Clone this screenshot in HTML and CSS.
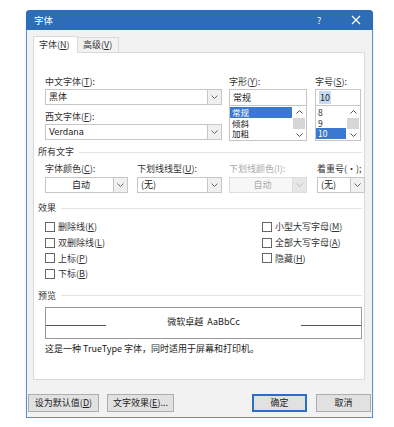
FILE: index.html
```html
<!DOCTYPE html>
<html>
  <head>
    <title>字体</title>
    <link rel="stylesheet" href="styles.css">
  </head>
  <body>
    <div class="dialog">
      <div class="titlebar">
        <span class="title">字体</span>
        <span class="help">?</span>
        <span class="close">
          <svg width="10" height="10" viewBox="0 0 10 10"><path d="M1 1L9 9M9 1L1 9" stroke="#fff" stroke-width="1.2"/></svg>
        </span>
      </div>

      <div class="body">
        <div class="tabs">
          <div class="tab active">字体(<u>N</u>)</div>
          <div class="tab">高级(<u>V</u>)</div>
        </div>

        <div class="panel">
          <div class="fonts">
            <div class="col">
              <div class="label">中文字体(<u>T</u>):</div>
              <div class="select">
                <span class="val">黑体</span>
                <span class="arrow"><svg width="7" height="4" viewBox="0 0 7 4"><path d="M0.5 0.5L3.5 3.5L6.5 0.5" fill="none" stroke="#666"/></svg></span>
              </div>
              <div class="label second">西文字体(<u>F</u>):</div>
              <div class="select">
                <span class="val latin">Verdana</span>
                <span class="arrow"><svg width="7" height="4" viewBox="0 0 7 4"><path d="M0.5 0.5L3.5 3.5L6.5 0.5" fill="none" stroke="#666"/></svg></span>
              </div>
            </div>
            <div class="col">
              <div class="label">字形(<u>Y</u>):</div>
              <div class="input">常规</div>
              <div class="list">
                <div class="items">
                  <div class="item selected">常规</div>
                  <div class="item">倾斜</div>
                  <div class="item">加粗</div>
                </div>
                <div class="scroll">
                  <svg width="7" height="4" viewBox="0 0 7 4"><path d="M0.5 3.5L3.5 0.5L6.5 3.5" fill="none" stroke="#555"/></svg>
                  <div class="thumb"></div>
                  <svg width="7" height="4" viewBox="0 0 7 4"><path d="M0.5 0.5L3.5 3.5L6.5 0.5" fill="none" stroke="#555"/></svg>
                </div>
              </div>
            </div>
            <div class="col">
              <div class="label">字号(<u>S</u>):</div>
              <div class="input"><span class="hl">10</span></div>
              <div class="list">
                <div class="items">
                  <div class="item">8</div>
                  <div class="item">9</div>
                  <div class="item selected">10</div>
                </div>
                <div class="scroll">
                  <svg width="7" height="4" viewBox="0 0 7 4"><path d="M0.5 3.5L3.5 0.5L6.5 3.5" fill="none" stroke="#555"/></svg>
                  <div class="thumb"></div>
                  <svg width="7" height="4" viewBox="0 0 7 4"><path d="M0.5 0.5L3.5 3.5L6.5 0.5" fill="none" stroke="#555"/></svg>
                </div>
              </div>
            </div>
          </div>

          <div class="group">所有文字</div>
          <div class="colors">
            <div class="col">
              <div class="label">字体颜色(<u>C</u>):</div>
              <div class="select">
                <span class="val center">自动</span>
                <span class="arrow"><svg width="7" height="4" viewBox="0 0 7 4"><path d="M0.5 0.5L3.5 3.5L6.5 0.5" fill="none" stroke="#666"/></svg></span>
              </div>
            </div>
            <div class="col">
              <div class="label">下划线线型(<u>U</u>):</div>
              <div class="select">
                <span class="val">(无)</span>
                <span class="arrow"><svg width="7" height="4" viewBox="0 0 7 4"><path d="M0.5 0.5L3.5 3.5L6.5 0.5" fill="none" stroke="#666"/></svg></span>
              </div>
            </div>
            <div class="col">
              <div class="label disabled">下划线颜色(I):</div>
              <div class="select off">
                <span class="val center">自动</span>
                <span class="arrow"><svg width="7" height="4" viewBox="0 0 7 4"><path d="M0.5 0.5L3.5 3.5L6.5 0.5" fill="none" stroke="#bbb"/></svg></span>
              </div>
            </div>
            <div class="col">
              <div class="label">着重号(·);</div>
              <div class="select">
                <span class="val">(无)</span>
                <span class="arrow"><svg width="7" height="4" viewBox="0 0 7 4"><path d="M0.5 0.5L3.5 3.5L6.5 0.5" fill="none" stroke="#666"/></svg></span>
              </div>
            </div>
          </div>

          <div class="group effects-title">效果</div>
          <div class="effects">
            <div class="checks">
              <div class="check"><span class="box"></span>删除线(<u>K</u>)</div>
              <div class="check"><span class="box"></span>双删除线(<u>L</u>)</div>
              <div class="check"><span class="box"></span>上标(<u>P</u>)</div>
              <div class="check"><span class="box"></span>下标(<u>B</u>)</div>
            </div>
            <div class="checks">
              <div class="check"><span class="box"></span>小型大写字母(<u>M</u>)</div>
              <div class="check"><span class="box"></span>全部大写字母(<u>A</u>)</div>
              <div class="check"><span class="box"></span>隐藏(<u>H</u>)</div>
            </div>
          </div>

          <div class="group preview-title">预览</div>
          <div class="preview">
            <span class="rule"></span>
            <span class="sample">微软卓越&nbsp; AaBbCc</span>
            <span class="rule"></span>
          </div>
          <div class="note">这是一种 TrueType 字体，同时适用于屏幕和打印机。</div>
        </div>

        <div class="footer">
          <div class="button">设为默认值(<u>D</u>)</div>
          <div class="button">文字效果(<u>E</u>)...</div>
          <div class="spacer"></div>
          <div class="button default">确定</div>
          <div class="button">取消</div>
        </div>
      </div>
    </div>
  </body>
</html>
```

FILE: styles.css
```css
* {
  padding: 0;
  margin: 0;
  box-sizing: border-box;
}

body {
  background: #fff;
  font-family: "Noto Sans CJK SC", sans-serif;
  font-size: 9px;
  color: #222;
}

u {
  text-decoration: underline;
  text-underline-offset: 1px;
}

.dialog {
  margin: 10px 0 0 26px;
  width: 347px;
  height: 408px;
  background: #f2f2f2;
  border: 1px solid #5d8fcf;
  border-top: none;
  border-radius: 4px 4px 0 0;
  box-shadow: 0 1px 2px rgba(0, 0, 0, 0.15);
}

.titlebar {
  height: 20px;
  background: #2d6db7;
  border-radius: 4px 4px 0 0;
  margin: 0 -1px;
  display: flex;
  align-items: center;
  color: #fff;
  font-size: 9.5px;
  padding: 0 0 0 8px;
}

.title {
  flex: 1;
}

.help {
  width: 34px;
  font-size: 9px;
}

.close {
  width: 22px;
  display: flex;
  align-items: center;
}

.body {
  padding: 6px 7px 0 6px;
}

.tabs {
  display: flex;
  height: 16px;
  align-items: flex-end;
}

.tab {
  height: 15px;
  line-height: 14px;
  padding: 0 5px;
  border: 1px solid #d9d9d9;
  border-bottom: none;
  background: #f2f2f2;
  color: #333;
}

.tab.active {
  height: 17px;
  width: 45px;
  background: #fff;
  line-height: 16px;
  margin-bottom: -1px;
  position: relative;
}

.tab:not(.active) {
  border-left: none;
  width: 41px;
}

.panel {
  width: 332px;
  height: 328px;
  background: #fff;
  border: 1px solid #d9d9d9;
  padding: 23px 2px 0 4px;
}

.label {
  height: 12px;
  line-height: 12px;
  margin-bottom: 1px;
  color: #333;
}

.label.second {
  margin-top: 6px;
  margin-bottom: 1px;
}

.label.disabled {
  color: #aaa;
}

.fonts {
  display: grid;
  grid-template-columns: 177px 78px 47px;
  column-gap: 7px;
  padding-left: 7px;
}

.fonts .col:nth-child(3) {
  margin-left: 1px;
}

.select {
  height: 16px;
  display: flex;
  border: 1px solid #c6c6c6;
  background: #fff;
}

.select .val {
  flex: 1;
  line-height: 14px;
  padding-left: 3px;
  color: #222;
}

.select .val.latin {
  font-family: "DejaVu Sans", sans-serif;
  font-size: 8.5px;
}

.select .val.center {
  text-align: center;
}

.select .arrow {
  width: 14px;
  border-left: 1px solid #c6c6c6;
  background: #f0f0f0;
  display: flex;
  align-items: center;
  justify-content: center;
}

.select.off {
  background: #f7f7f7;
  border-color: #ddd;
}

.select.off .val {
  color: #aaa;
}

.select.off .arrow {
  background: #e6e6e6;
  border-left-color: #ddd;
}

.input {
  height: 17px;
  border: 1px solid #c6c6c6;
  line-height: 15px;
  padding-left: 3px;
  color: #222;
}

.input .hl {
  background: #c7dcf4;
  padding: 0 1px;
}

.list {
  height: 35px;
  border: 1px solid #c6c6c6;
  border-top: none;
  display: flex;
}

.items {
  flex: 1;
  padding-top: 1px;
}

.item {
  height: 10.7px;
  line-height: 10.7px;
  font-size: 8.5px;
  padding-left: 2px;
  overflow: hidden;
  color: #222;
}

.item.selected {
  background: #3a79cf;
  color: #fff;
}

.scroll {
  width: 14px;
  display: flex;
  flex-direction: column;
  align-items: center;
  justify-content: space-between;
  padding: 4px 0 3px;
}

.thumb {
  width: 12px;
  height: 11px;
  background: #d6d6d6;
}

.group {
  display: flex;
  align-items: center;
  height: 12px;
  line-height: 12px;
  margin-top: 5px;
  color: #333;
}

.group::after {
  content: "";
  flex: 1;
  height: 1px;
  background: #e3e3e3;
  margin-left: 5px;
}

.colors {
  display: grid;
  grid-template-columns: 83px 85px 78px 47px;
  column-gap: 9px;
  padding-left: 7px;
  margin-top: 5px;
}

.colors .col:nth-child(3) {
  margin-left: -2px;
  width: 78px;
}

.colors .col:nth-child(4) {
  margin-left: -1px;
}

.colors .label {
  margin-bottom: 2px;
}

.effects-title {
  margin-top: 9px;
}

.effects {
  display: flex;
  padding-left: 7px;
  margin-top: 5px;
}

.checks:first-child {
  width: 217px;
}

.check {
  height: 15.7px;
  display: flex;
  align-items: center;
  color: #333;
}

.box {
  width: 10px;
  height: 10px;
  border: 1px solid #666;
  margin-right: 3px;
  background: #fff;
}

.preview-title {
  margin-top: 8px;
}

.preview {
  margin: 5px 0 0 7px;
  height: 32px;
  border: 1px solid #999;
  display: flex;
  align-items: center;
  padding-top: 4px;
}

.preview .rule {
  width: 60px;
  height: 1px;
  background: #555;
  margin-top: 1px;
}

.preview .sample {
  flex: 1;
  text-align: center;
  margin-top: -6px;
  color: #222;
}

.note {
  margin: 4px 0 0 7px;
  line-height: 12px;
  color: #222;
}

.footer {
  display: flex;
  margin: 14px -6px 0 -5px;
}

.button {
  height: 18px;
  line-height: 16px;
  border: 1px solid #adadad;
  background: #e1e1e1;
  text-align: center;
  color: #222;
}

.button:nth-child(1) {
  width: 71px;
}

.button:nth-child(2) {
  width: 67px;
  margin-left: 8px;
}

.spacer {
  flex: 1;
}

.button.default {
  width: 55px;
  border-color: #2b6fc5;
  box-shadow: inset 0 0 0 1px #2b6fc5;
}

.button:nth-child(5) {
  width: 55px;
  margin-left: 9px;
}
```
